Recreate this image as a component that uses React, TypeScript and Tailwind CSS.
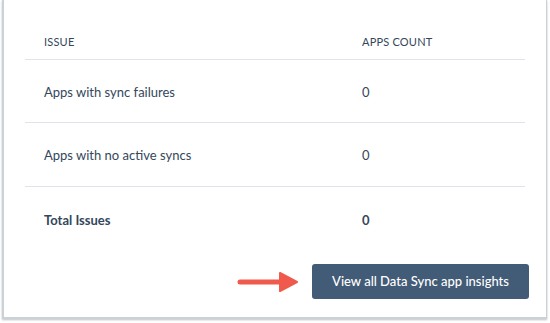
export default function App() {
  return (
    <div className="w-[550px] h-[323px] bg-white" style={{ fontFamily: "Lato, 'Noto Sans', sans-serif" }}>
      <div className="ml-[2px] w-[545px] h-[319px] bg-white border-l-2 border-r border-b-2 border-[#c9d1d9] shadow-[0_1px_2px_rgba(0,0,0,0.25)] flex flex-col">
        <div className="mx-[21px] mt-0">
          <div className="h-[60px] border-b border-[#dfe3eb] flex items-end pb-[9px] text-[11px] text-[#33475b] tracking-[0.2px]">
            <div className="w-[337px] pl-[19px]">ISSUE</div>
            <div>APPS COUNT</div>
          </div>
          <div className="h-[63px] pt-[3px] border-b border-[#dfe3eb] flex items-center text-[13px] text-[#33475b]">
            <div className="w-[337px] pl-[19px]">Apps with sync failures</div>
            <div>0</div>
          </div>
          <div className="h-[64px] pt-[3px] border-b border-[#dfe3eb] flex items-center text-[13px] text-[#33475b]">
            <div className="w-[337px] pl-[19px]">Apps with no active syncs</div>
            <div>0</div>
          </div>
          <div className="h-[64px] pt-[3px] flex items-center text-[13px] font-bold text-[#33475b]">
            <div className="w-[337px] pl-[19px]">Total Issues</div>
            <div>0</div>
          </div>
        </div>
        <div className="flex items-center justify-end mr-[17px] mt-[13px] gap-[10px]">
          <svg width="66" height="24" viewBox="0 0 66 24">
            <line x1="4" y1="12" x2="48" y2="12" stroke="#ef5a4c" strokeWidth="5" strokeLinecap="round" />
            <path d="M44 3 L61 12 L44 21 Z" fill="#ef5a4c" stroke="#ef5a4c" strokeWidth="2" strokeLinejoin="round" />
          </svg>
          <button className="w-[217px] h-[35px] rounded-[3px] bg-[#425b76] text-white text-[13px] font-medium">
            View all Data Sync app insights
          </button>
        </div>
      </div>
    </div>
  );
}
